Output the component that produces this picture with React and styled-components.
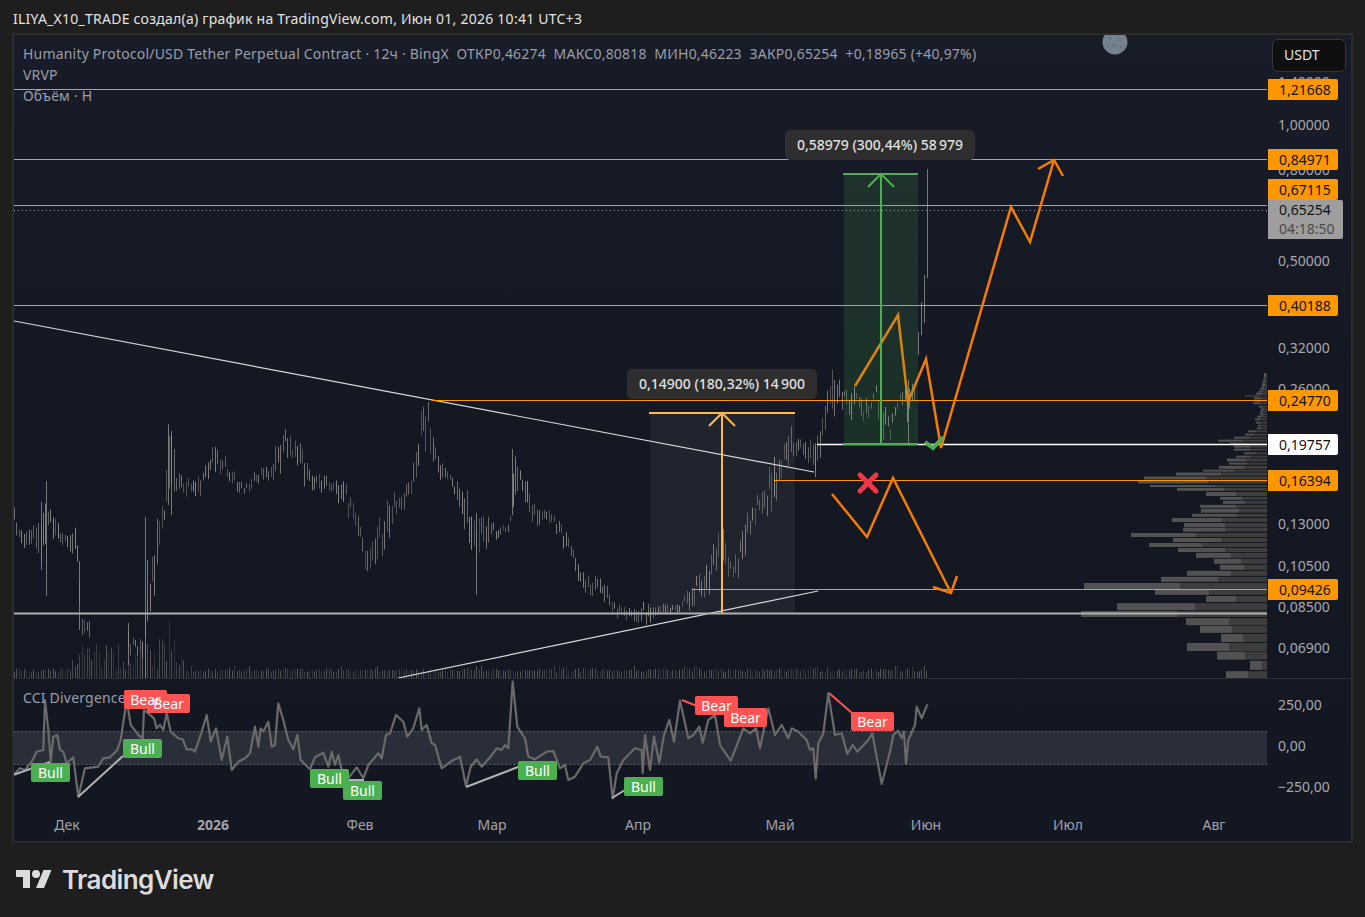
import React from 'react';
import styled, {createGlobalStyle} from "styled-components";

const font = '"Noto Sans", "Liberation Sans", sans-serif';

// all chart data below is in page pixels, the svg viewBoxes use the same numbers
const envelope = [
    [14, 507, 527], [20, 527, 548], [30, 527, 548], [36, 517, 550], [41, 502, 570], [46, 500, 560], [50, 505, 525],
    [55, 505, 550], [60, 525, 545], [65, 525, 545], [70, 530, 555], [76, 527, 557], [79, 561, 600], [81, 615, 640],
    [88, 615, 640], [91, 631, 660], [126, 623, 660], [134, 640, 658], [142, 635, 660], [148, 580, 620], [155, 515, 593],
    [160, 503, 555], [165, 495, 520], [168, 424, 505], [171, 431, 515], [175, 455, 500], [180, 475, 497], [200, 475, 497],
    [206, 458, 480], [216, 439, 475], [225, 455, 475], [230, 465, 490], [245, 485, 495], [256, 466, 485], [270, 467, 480],
    [278, 429, 480], [285, 428, 460], [295, 440, 463], [302, 438, 485], [310, 470, 490], [330, 475, 495], [340, 475, 505],
    [355, 500, 530], [365, 540, 573], [375, 520, 565], [385, 501, 560], [395, 490, 515], [405, 485, 510], [415, 446, 495],
    [422, 400, 460], [428, 398, 445], [435, 440, 475], [440, 457, 488], [450, 473, 485], [465, 480, 532], [475, 513, 560],
    [485, 505, 550], [495, 525, 540], [505, 525, 535], [510, 515, 530], [513, 450, 515], [520, 470, 495], [530, 485, 520],
    [540, 510, 530], [550, 505, 525], [560, 520, 540], [570, 540, 565], [575, 555, 580], [585, 575, 600], [595, 575, 595],
    [610, 585, 610], [615, 605, 620], [630, 602, 620], [645, 600, 625], [660, 600, 620], [680, 605, 615], [690, 580, 610],
    [700, 570, 600], [715, 540, 590], [720, 508, 570], [730, 560, 580], [737, 550, 580], [745, 510, 555], [755, 495, 525],
    [765, 485, 515], [772, 450, 520], [782, 445, 475], [790, 425, 470], [800, 433, 450], [815, 435, 475], [825, 400, 440],
    [832, 366, 420], [838, 375, 420], [845, 385, 400], [850, 385, 430], [857, 385, 400], [862, 398, 430], [870, 395, 415],
    [875, 380, 400], [880, 400, 445], [885, 405, 440], [890, 420, 440], [895, 400, 415], [905, 383, 405], [908, 380, 445],
    [915, 375, 400], [918, 330, 355], [922, 302, 335], [925, 275, 320], [927, 170, 278],
];

const spikes = [
    [46, 481, 596], [41, 502, 570], [79, 561, 630], [128, 623, 665], [145, 517, 680], [147, 560, 620], [168, 424, 505],
    [171, 431, 515], [476, 513, 595], [512, 449, 515], [722, 508, 600], [815, 443, 477], [881, 400, 445], [908, 380, 445],
    [918, 332, 355], [921, 302, 335], [924, 275, 323], [927, 169, 278],
];

const vrvp = [
    [42, 612, 618, 2], [48, 612, 618, 2], [55, 610, 617, 2], [62, 610, 617, 2], [68, 606, 615, 2], [75, 606, 615, 2], [82, 604, 612, 2],
    [88, 600, 612, 2], [95, 596, 608, 2], [101, 588, 606, 2], [108, 555, 600, 1], [115, 582, 604, 2], [122, 585, 600, 2], [130, 580, 600, 2],
    [140, 597, 610, 2], [148, 603, 612, 2], [155, 600, 610, 2], [163, 600, 612, 2], [170, 592, 605, 2], [178, 585, 600, 2], [188, 588, 604, 2],
    [197, 594, 604, 2], [205, 590, 604, 2], [214, 564, 590, 2], [224, 555, 582, 2], [233, 522, 570, 2], [242, 474, 546, 2], [251, 510, 558, 2],
    [260, 522, 570, 2], [269, 522, 574, 2], [280, 552, 585, 2], [290, 528, 570, 2], [300, 501, 558, 3], [311, 507, 561, 2], [322, 477, 552, 3],
    [332, 429, 522, 2], [342, 348, 483, 3], [354, 252, 440, 3], [366, 234, 444, 3], [378, 270, 465, 2], [388, 351, 492, 3], [402, 438, 530, 4],
    [415, 480, 548, 3], [427, 489, 555, 3], [439, 420, 528, 3], [452, 423, 537, 4], [466, 396, 531, 3], [480, 336, 486, 4], [495, 372, 495, 4],
    [509, 369, 495, 4], [525, 213, 408, 4], [540, 339, 483, 4], [555, 267, 426, 4], [570, 354, 495, 4], [586, 408, 513, 5], [604, 462, 543, 5],
    [622, 480, 552, 5], [640, 381, 513, 5], [658, 303, 474, 5], [678, 72, 360, 6], [697, 285, 447, 5], [717, 438, 528, 6], [740, 171, 405, 7],
    [762, 63, 351, 6], [785, 378, 507, 7], [808, 420, 516, 7], [834, 483, 549, 8], [861, 381, 507, 8], [887, 471, 555, 8], [916, 570, 606, 9],
    [944, 498, 564, 7],
];

const cciLeft = [
    [40, 315], [60, 295], [75, 300], [95, 275], [110, 245], [130, 240], [135, 90], [145, 180], [152, 275], [160, 200], [172, 195], [180, 240], [190, 245],
    [200, 280], [220, 262], [235, 380], [255, 295], [295, 290], [310, 265], [330, 262], [352, 240], [362, 210], [380, 90], [392, 165], [415, 195], [428, 205],
    [432, 120], [445, 130], [462, 145], [470, 175], [480, 165], [490, 180], [500, 130], [512, 185], [535, 205], [548, 208], [560, 238], [575, 238], [585, 245],
    [605, 185], [620, 135], [632, 215], [648, 175], [665, 270], [682, 200], [695, 300], [715, 275], [735, 265], [750, 250], [765, 170], [775, 230], [782, 175],
    [790, 185], [805, 155], [815, 230], [825, 225], [835, 100], [850, 150], [865, 210], [880, 238], [892, 195], [902, 270], [930, 298], [945, 262], [970, 248],
    [985, 290], [995, 245], [1005, 285], [1015, 255], [1025, 300], [1045, 325], [1070, 292], [1090, 325], [1105, 285], [1135, 250], [1145, 265], [1158, 195],
    [1170, 190], [1188, 135], [1210, 155], [1222, 200], [1240, 175], [1258, 115], [1265, 180], [1280, 165], [1295, 220], [1305, 225], [1325, 295], [1345, 280],
    [1360, 270], [1380, 262],
];

const cciRight = [
    [0, 260], [18, 348], [32, 290], [50, 268], [65, 290], [90, 262], [110, 235], [125, 240], [135, 225], [145, 235], [158, 35], [172, 170], [195, 205], [205, 260],
    [225, 268], [260, 245], [280, 243], [300, 295], [315, 285], [325, 330], [345, 320], [370, 280], [390, 270], [412, 230], [422, 260], [445, 262], [458, 385],
    [470, 310], [490, 270], [525, 235], [545, 240], [548, 310], [555, 195], [570, 300], [582, 200], [598, 278], [612, 195], [628, 150], [642, 215], [660, 92],
    [685, 205], [700, 195], [718, 170], [728, 218], [745, 150], [765, 135], [780, 225], [812, 272], [825, 240], [850, 175], [870, 190], [888, 175], [900, 235],
    [925, 115], [945, 195], [965, 165], [985, 205], [995, 175], [1015, 185], [1040, 210], [1050, 240], [1060, 235], [1067, 325], [1075, 220], [1090, 190],
    [1105, 70], [1125, 195], [1145, 190], [1162, 252], [1178, 225], [1192, 245], [1225, 210], [1237, 190], [1265, 342], [1290, 245], [1300, 195], [1315, 182],
    [1325, 205], [1332, 185], [1338, 282], [1345, 210], [1365, 165], [1370, 110], [1385, 145], [1402, 103],
];

const cciPoints = [
    ...cciLeft.map(([x, y]) => `${(x / 3).toFixed(1)},${(670 + y / 3).toFixed(1)}`),
    ...cciRight.map(([x, y]) => `${(460 + x / 3).toFixed(1)},${(670 + y / 3).toFixed(1)}`),
].join(' ');

const divergences = [
    {color: '#b2b2b2', points: '13,775 50,762'},
    {color: '#b2b2b2', points: '78,797 123,756'},
    {color: '#b2b2b2', points: '348,780 364,780'},
    {color: '#b2b2b2', points: '466,787 518,767'},
    {color: '#b2b2b2', points: '612,798 625,790'},
    {color: '#ff5252', points: '682,700 697,706'},
    {color: '#ff5252', points: '829,693 852,713'},
];

const tags = [
    {kind: 'bull', x: 31, y: 763}, {kind: 'bull', x: 123, y: 739}, {kind: 'bear', x: 124, y: 690}, {kind: 'bear', x: 147, y: 694},
    {kind: 'bull', x: 310, y: 769}, {kind: 'bull', x: 343, y: 781}, {kind: 'bull', x: 518, y: 761}, {kind: 'bull', x: 624, y: 777},
    {kind: 'bear', x: 695, y: 696}, {kind: 'bear', x: 724, y: 708}, {kind: 'bear', x: 851, y: 712},
];

const priceTicks = [
    ['1,40000', 82], ['1,00000', 125], ['0,80000', 170], ['0,50000', 261], ['0,32000', 348], ['0,26000', 389],
    ['0,16000', 483], ['0,13000', 524], ['0,10500', 566], ['0,08500', 607], ['0,06900', 648],
];

const priceLabels = [
    ['1,21668', 79], ['0,84971', 149], ['0,67115', 179], ['0,40188', 295], ['0,24770', 390], ['0,16394', 470], ['0,09426', 579],
];

const timeTicks = [
    ['Дек', 67], ['2026', 213, true], ['Фев', 360], ['Мар', 492], ['Апр', 638], ['Май', 780], ['Июн', 926], ['Июл', 1068], ['Авг', 1214],
];

const random = (seed) => {
    let s = seed;
    return () => {
        s = (s * 16807) % 2147483647;
        return s / 2147483647;
    };
};

const envelopeAt = (x) => {
    for (let i = 1; i < envelope.length; i++) {
        const [x1, hi1, lo1] = envelope[i];
        if (x <= x1) {
            const [x0, hi0, lo0] = envelope[i - 1];
            const t = (x - x0) / (x1 - x0);
            return [hi0 + (hi1 - hi0) * t, lo0 + (lo1 - lo0) * t];
        }
    }
    return envelope[envelope.length - 1].slice(1);
};

const buildBars = () => {
    const rnd = random(4711);
    const bars = [];
    for (let x = 14; x < 916; x += 2.42) {
        if (x > 91 && x < 126) continue;
        const [hi, lo] = envelopeAt(x);
        const range = lo - hi;
        const top = hi + rnd() * range * 0.5;
        const len = range * (0.3 + rnd() * 0.45);
        bars.push({x: Math.round(x) + 0.5, y1: top, y2: Math.min(lo, top + len), shade: rnd()});
    }
    spikes.forEach(([x, y1, y2]) => bars.push({x: x + 0.5, y1, y2, shade: 0.7}));
    return bars;
};

const buildVolumes = () => {
    const rnd = random(913);
    const volumes = [];
    for (let x = 14; x < 928; x += 2.42) {
        let h = 6 + rnd() * 4;
        if (x > 70 && x < 185) h = 8 + rnd() * 32;
        else if (rnd() > 0.92) h = 12;
        if (x > 140 && x < 148) h = 34;
        if (x > 167 && x < 171) h = 58;
        volumes.push({x: Math.round(x) + 0.5, h, shade: rnd()});
    }
    return volumes;
};

const bars = buildBars();
const volumes = buildVolumes();

const MainChart = () => (
    <ChartSvg viewBox="14 35 1253 643">
        <circle cx="1115" cy="42" r="12.5" fill="#74828e"/>
        <circle cx="1110" cy="38" r="1.6" fill="#677580"/>
        <circle cx="1120" cy="40" r="1.4" fill="#677580"/>
        <circle cx="1114" cy="45" r="1.8" fill="#677580"/>
        <circle cx="1121" cy="47" r="1.2" fill="#677580"/>
        <circle cx="1108" cy="46" r="1.1" fill="#677580"/>

        <rect x="650" y="413" width="145" height="200" fill="#ffffff" fillOpacity="0.055"/>

        {vrvp.map(([y, left, split, h]) => (
            <g key={y}>
                <rect x={1060 + left / 3} y={360 + y / 3 - h / 2} width={(split - left) / 3} height={h} fill="#525252"/>
                <rect x={1060 + split / 3} y={360 + y / 3 - h / 2} width={1267 - (1060 + split / 3)} height={h} fill="#3d3d3d"/>
            </g>
        ))}

        {volumes.map((v, i) => (
            <line key={i} x1={v.x} x2={v.x} y1={678} y2={678 - v.h} stroke="#6e6e6e" strokeOpacity={0.25 + v.shade * 0.55}/>
        ))}
        {bars.map((b, i) => (
            <line key={i} x1={b.x} x2={b.x} y1={b.y1} y2={b.y2} stroke="#8e8e8e" strokeOpacity={0.45 + b.shade * 0.5}/>
        ))}

        <line x1="14" y1="321" x2="814" y2="472" stroke="#d8d8d8" strokeWidth="1.2"/>
        <line x1="398" y1="678" x2="818" y2="591" stroke="#d8d8d8" strokeWidth="1.2"/>
        <line x1="14" y1="613.5" x2="1267" y2="613.5" stroke="#b0b0b0" strokeWidth="2"/>
        <line x1="817" y1="444.5" x2="1267" y2="444.5" stroke="#ffffff" strokeWidth="1.5"/>

        <line x1="14" y1="89.5" x2="1267" y2="89.5" stroke="#ff9800"/>
        <line x1="14" y1="159.5" x2="1267" y2="159.5" stroke="#ff9800"/>
        <line x1="14" y1="205.5" x2="1267" y2="205.5" stroke="#ff9800"/>
        <line x1="14" y1="305.5" x2="1267" y2="305.5" stroke="#ff9800"/>
        <line x1="432" y1="400.5" x2="1267" y2="400.5" stroke="#ff9800"/>
        <line x1="774" y1="480.5" x2="1267" y2="480.5" stroke="#ff9800"/>
        <line x1="692" y1="589.5" x2="1267" y2="589.5" stroke="#ff9800"/>
        <line x1="14" y1="210.5" x2="1267" y2="210.5" stroke="#9a9ea8" strokeDasharray="1 3"/>

        <line x1="649" y1="413" x2="795" y2="413" stroke="#ffb74d" strokeWidth="2"/>
        <line x1="722" y1="613" x2="722" y2="413" stroke="#ffb74d" strokeWidth="2"/>
        <polyline points="709,426 722,413 735,426" fill="none" stroke="#ffb74d" strokeWidth="2"/>

        <polyline points="855,386 898,315 908,402 926,359 941,448 1011,207 1030,242 1054,160" fill="none" stroke="#f57c00" strokeWidth="2.5"/>
        <polyline points="1038,169 1054,160 1063,176" fill="none" stroke="#f57c00" strokeWidth="2.5"/>
        <polyline points="832,494 867,537 893,478 951,593" fill="none" stroke="#f57c00" strokeWidth="2.5"/>
        <polyline points="933,587 951,593 957,576" fill="none" stroke="#f57c00" strokeWidth="2.5"/>

        {/* the green range sits over the orange path, it tints it where they cross */}
        <rect x="844" y="174" width="74" height="270" fill="#4caf50" fillOpacity="0.16"/>
        <line x1="843" y1="174" x2="918" y2="174" stroke="#4caf50" strokeWidth="2"/>
        <line x1="843" y1="444" x2="918" y2="444" stroke="#4caf50" strokeWidth="2"/>
        <line x1="881" y1="444" x2="881" y2="174" stroke="#4caf50" strokeWidth="2"/>
        <polyline points="868,187 881,174 894,187" fill="none" stroke="#4caf50" strokeWidth="2"/>

        <polyline points="925,442 933,448 943,437" fill="none" stroke="#4caf50" strokeWidth="4"/>
        <path d="M860 475L876 491M876 475L860 491" stroke="#f23645" strokeWidth="5" strokeLinecap="round"/>
    </ChartSvg>
);

const CciChart = () => (
    <ChartSvg viewBox="14 679 1253 129">
        <rect x="14" y="731" width="1253" height="34" fill="#2a2e39"/>
        <line x1="14" y1="731.5" x2="1267" y2="731.5" stroke="#787b86" strokeDasharray="1 3"/>
        <line x1="14" y1="764.5" x2="1267" y2="764.5" stroke="#787b86" strokeDasharray="1 3"/>
        <polyline points={cciPoints} fill="none" stroke="#6a6a6a" strokeWidth="2.2" strokeLinejoin="round"/>
        {divergences.map(d => (
            <polyline key={d.points} points={d.points} fill="none" stroke={d.color} strokeWidth="2"/>
        ))}
    </ChartSvg>
);

const App = () => {
    return (
        <Page>
            <GlobalStyle/>
            <Title>ILIYA_X10_TRADE создал(а) график на TradingView.com, Июн 01, 2026 10:41 UTC+3</Title>
            <ChartFrame>
                <PlotPane>
                    <MainChart/>
                    <Legend>
                        <div>Humanity Protocol/USD Tether Perpetual Contract · 12ч · BingX&nbsp; ОТКР0,46274&nbsp; МАКС0,80818&nbsp; МИН0,46223&nbsp; ЗАКР0,65254&nbsp; +0,18965 (+40,97%)</div>
                        <div>VRVP</div>
                        <div>Объём · Н</div>
                    </Legend>
                    <RangeNote $x={627} $y={369} $w={190}>0,14900 (180,32%) 14&#8201;900</RangeNote>
                    <RangeNote $x={785} $y={130} $w={190}>0,58979 (300,44%) 58&#8201;979</RangeNote>
                </PlotPane>
                <PriceAxis>
                    {priceTicks.map(([text, y]) => <AxisTick key={text} $y={y} $top={35}>{text}</AxisTick>)}
                    <CurrencyButton>USDT</CurrencyButton>
                    {priceLabels.map(([text, y]) => <PriceLabel key={text} $y={y}>{text}</PriceLabel>)}
                    <PriceLabel $y={434} $light>0,19757</PriceLabel>
                    <LastPrice>
                        0,65254
                        <Countdown>04:18:50</Countdown>
                    </LastPrice>
                </PriceAxis>
                <IndicatorPane>
                    <CciChart/>
                    <IndicatorName>CCI Divergences</IndicatorName>
                    {tags.map(t => (
                        <Tag key={`${t.x}-${t.y}`} $kind={t.kind} $x={t.x} $y={t.y}>
                            <TagText>{t.kind === 'bull' ? 'Bull' : 'Bear'}</TagText>
                        </Tag>
                    ))}
                </IndicatorPane>
                <IndicatorAxis>
                    <AxisTick $y={705} $top={679}>250,00</AxisTick>
                    <AxisTick $y={746} $top={679}>0,00</AxisTick>
                    <AxisTick $y={787} $top={679}>−250,00</AxisTick>
                </IndicatorAxis>
                <TimeAxis>
                    {timeTicks.map(([text, x, strong]) => <TimeTick key={text} $x={x} $strong={strong}>{text}</TimeTick>)}
                </TimeAxis>
            </ChartFrame>
            <Footer>
                <svg width="38" height="28" viewBox="0 0 36 28" fill="#dcdcdc">
                    <path d="M14 22H7V11H0V4h14v18zM28 22h-8l7.5-18h8L28 22z"/>
                    <circle cx="20" cy="8" r="4"/>
                </svg>
                <Brand>TradingView</Brand>
            </Footer>
        </Page>
    );
}

const GlobalStyle = createGlobalStyle`
  html, body {
    margin: 0;
    padding: 0;
    background: #1e1e1e;
  }
`;

const Page = styled.div`
  width: 1365px;
  height: 917px;
  overflow: hidden;
  background: #1e1e1e;
  font-family: ${font};
`;

const Title = styled.div`
  height: 33px;
  padding: 4px 0 0 13px;
  box-sizing: border-box;
  font-size: 14px;
  line-height: 29px;
  letter-spacing: 0.25px;
  color: #e3e3e3;
  white-space: nowrap;
`;

const ChartFrame = styled.div`
  margin: 0 12px;
  width: 1341px;
  height: 810px;
  box-sizing: border-box;
  border: 2px solid #2c2c2c;
  display: grid;
  grid-template-columns: 1253px 84px;
  grid-template-rows: 643px 130px 33px;
  background: linear-gradient(180deg, #181c28 0%, #141823 45%, #131722 100%);
`;

const ChartSvg = styled.svg`
  display: block;
  width: 100%;
  height: 100%;
`;

const PlotPane = styled.div`
  position: relative;
  overflow: hidden;
`;

const Legend = styled.div`
  position: absolute;
  left: 9px;
  top: 8px;
  font-size: 14px;
  line-height: 21px;
  letter-spacing: 0.2px;
  color: #9a9ea9;
  white-space: nowrap;
`;

const RangeNote = styled.div`
  position: absolute;
  left: ${p => p.$x - 14}px;
  top: ${p => p.$y - 35}px;
  width: ${p => p.$w}px;
  height: 30px;
  border-radius: 5px;
  background: #2e2e2e;
  color: #e0e0e0;
  font-size: 14px;
  font-weight: 500;
  line-height: 30px;
  text-align: center;
  white-space: nowrap;
`;

const PriceAxis = styled.div`
  position: relative;
`;

const AxisTick = styled.span`
  position: absolute;
  left: 11px;
  top: ${p => p.$y - p.$top - 10}px;
  font-size: 14px;
  line-height: 20px;
  color: #a6a9b3;
  white-space: nowrap;
`;

const CurrencyButton = styled.div`
  position: absolute;
  left: 5px;
  top: 4px;
  width: 74px;
  height: 33px;
  box-sizing: border-box;
  padding-left: 11px;
  border: 1px solid #363636;
  border-radius: 6px;
  background: #0f0f0f;
  color: #e3e3e3;
  font-size: 14px;
  line-height: 29px;
`;

const PriceLabel = styled.div`
  position: absolute;
  left: 1px;
  top: ${p => p.$y - 35}px;
  width: 70px;
  height: 21px;
  box-sizing: border-box;
  padding-left: 11px;
  border-radius: 0 2px 2px 0;
  background: ${p => (p.$light ? '#ffffff' : '#ff9800')};
  color: #131313;
  font-size: 14px;
  line-height: 21px;
`;

const LastPrice = styled.div`
  position: absolute;
  left: 1px;
  top: 165px;
  width: 75px;
  height: 39px;
  box-sizing: border-box;
  padding-left: 11px;
  border-radius: 0 2px 2px 0;
  background: #9e9e9e;
  color: #131313;
  font-size: 14px;
  line-height: 19px;
`;

const Countdown = styled.div`
  color: #4a4a4a;
`;

const IndicatorPane = styled.div`
  position: relative;
  overflow: hidden;
  isolation: isolate;
  border-top: 1px solid #2a2e39;
`;

const IndicatorName = styled.div`
  position: absolute;
  left: 9px;
  top: 9px;
  font-size: 14px;
  line-height: 20px;
  letter-spacing: 0.2px;
  color: #9a9ea9;
`;

const Tag = styled.div`
  position: absolute;
  left: ${p => p.$x - 14}px;
  top: ${p => p.$y - 679}px;
  width: ${p => (p.$kind === 'bull' ? 39 : 43)}px;
  height: 19px;
  border-radius: 2px;
  background: ${p => (p.$kind === 'bull' ? '#4caf50' : '#ff5252')};
  font-size: 14px;
  line-height: 19px;
  text-align: center;
`;

// the texts of neighbouring tags stay above every tag background
const TagText = styled.span`
  position: relative;
  z-index: 1;
  color: #ffffff;
`;

const IndicatorAxis = styled.div`
  position: relative;
  border-top: 1px solid #2a2e39;
`;

const TimeAxis = styled.div`
  position: relative;
  grid-column: 1 / 3;
`;

const TimeTick = styled.span`
  position: absolute;
  left: ${p => p.$x - 14}px;
  top: 7px;
  transform: translateX(-50%);
  font-size: 14px;
  line-height: 20px;
  font-weight: ${p => (p.$strong ? 700 : 400)};
  color: #a0a3ad;
`;

const Footer = styled.div`
  display: flex;
  align-items: center;
  gap: 9px;
  margin-top: 20px;
  padding-left: 15px;
`;

const Brand = styled.span`
  font-family: Inter, ${font};
  font-size: 26px;
  font-weight: 600;
  letter-spacing: -0.6px;
  line-height: 34px;
  color: #dcdcdc;
`;

export default App;
